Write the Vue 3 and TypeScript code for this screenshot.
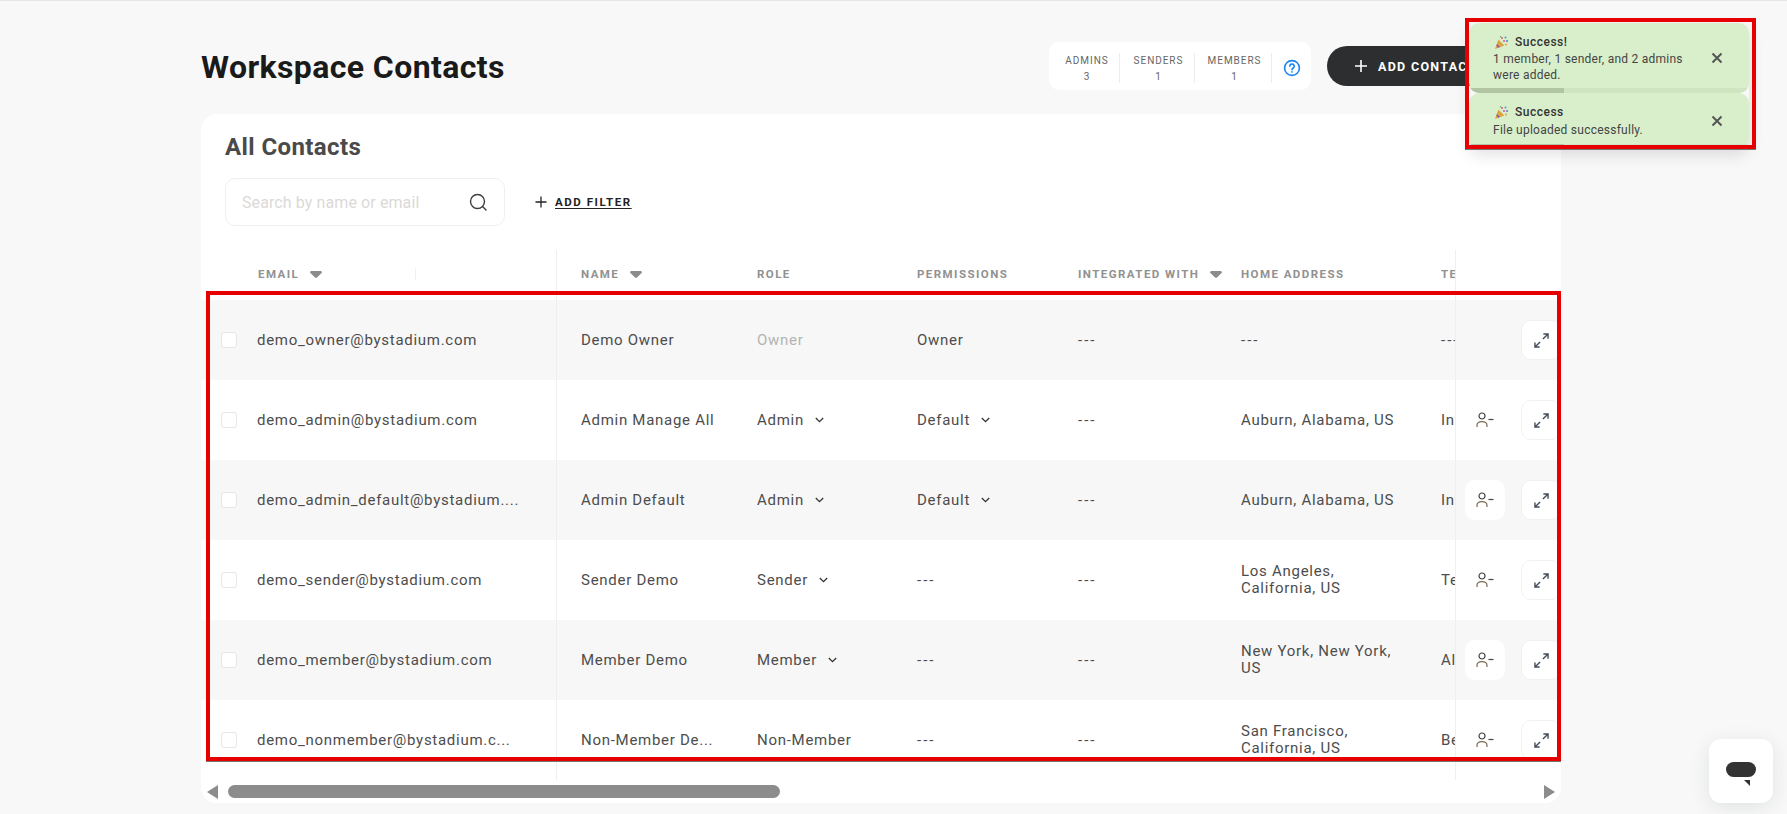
<template>
  <div class="page">
    <header class="head">
      <h1 class="title">Workspace Contacts</h1>
      <div class="head-right">
        <div class="stats">
          <div v-for="s in stats" :key="s.label" class="stat" :style="{ width: s.width + 'px' }">
            <span class="stat-label">{{ s.label }}</span>
            <span class="stat-value">{{ s.value }}</span>
          </div>
          <div class="stat-help">
            <svg width="18" height="18" viewBox="0 0 18 18" fill="none" stroke="#1a84f0" stroke-width="1.6">
              <circle cx="9" cy="9" r="7.4" />
              <path d="M6.8 7.2a2.2 2.2 0 1 1 3.4 1.8c-.8.5-1.2.9-1.2 1.7" stroke-linecap="round" />
              <circle cx="9" cy="12.9" r=".5" fill="#1a84f0" stroke-width=".8" />
            </svg>
          </div>
        </div>
        <button class="add-btn">
          <svg width="14" height="14" viewBox="0 0 14 14" stroke="#fff" stroke-width="1.6"><path d="M7 1v12M1 7h12" /></svg>
          ADD CONTACT
        </button>
      </div>
    </header>

    <section class="card">
      <div class="card-top">
        <h2 class="card-title">All Contacts</h2>
        <div class="filters">
          <div class="search">
            <span class="search-ph">Search by name or email</span>
            <svg width="20" height="20" viewBox="0 0 20 20" fill="none" stroke="#3d3d3d" stroke-width="1.4">
              <circle cx="9.5" cy="9.5" r="7" />
              <path d="M14.6 14.6l3.4 3.4" stroke-linecap="round" />
            </svg>
          </div>
          <a class="add-filter">
            <svg width="12" height="12" viewBox="0 0 12 12" stroke="#222" stroke-width="1.3"><path d="M6 .5v11M.5 6h11" /></svg>
            <span>ADD FILTER</span>
          </a>
        </div>
      </div>

      <div class="table">
        <div class="row row-head">
          <div class="cell first">
            <span class="th th-email">EMAIL<svg class="caret" width="12" height="7" viewBox="0 0 12 7"><path d="M1.6 0h8.8c1.2 0 1.9 1.2 1.2 2.1L7 6.4c-.5.6-1.5.6-2 0L.4 2.1C-.3 1.2.4 0 1.6 0z" /></svg></span>
            <span class="th-tick" />
          </div>
          <div class="cell"><span class="th">NAME<svg class="caret" width="12" height="7" viewBox="0 0 12 7"><path d="M1.6 0h8.8c1.2 0 1.9 1.2 1.2 2.1L7 6.4c-.5.6-1.5.6-2 0L.4 2.1C-.3 1.2.4 0 1.6 0z" /></svg></span></div>
          <div class="cell"><span class="th">ROLE</span></div>
          <div class="cell"><span class="th">PERMISSIONS</span></div>
          <div class="cell"><span class="th">INTEGRATED WITH<svg class="caret" width="12" height="7" viewBox="0 0 12 7"><path d="M1.6 0h8.8c1.2 0 1.9 1.2 1.2 2.1L7 6.4c-.5.6-1.5.6-2 0L.4 2.1C-.3 1.2.4 0 1.6 0z" /></svg></span></div>
          <div class="cell"><span class="th">HOME ADDRESS</span></div>
          <div class="cell"><span class="th">TEAM</span></div>
          <div class="actions" />
        </div>

        <div v-for="(r, i) in rows" :key="r.email" class="row" :class="{ odd: i % 2 === 0 }">
          <div class="cell first">
            <span class="check" />
            <span class="nowrap">{{ r.email }}</span>
          </div>
          <div class="cell"><span class="nowrap">{{ r.name }}</span></div>
          <div class="cell">
            <span :class="{ muted: r.role === 'Owner' }">{{ r.role }}</span>
            <svg v-if="r.roleMenu" class="chev" width="9" height="6" viewBox="0 0 9 6" fill="none" stroke="#333" stroke-width="1.3"><path d="M.8 1l3.7 3.7L8.2 1" /></svg>
          </div>
          <div class="cell">
            <span :class="dash(r.perm)">{{ r.perm }}</span>
            <svg v-if="r.permMenu" class="chev" width="9" height="6" viewBox="0 0 9 6" fill="none" stroke="#333" stroke-width="1.3"><path d="M.8 1l3.7 3.7L8.2 1" /></svg>
          </div>
          <div class="cell"><span class="dash">---</span></div>
          <div class="cell"><span class="addr" :class="dash(r.address)">{{ r.address }}</span></div>
          <div class="cell nowrap"><span :class="dash(r.team)">{{ r.team }}</span></div>
          <div class="actions">
            <button v-if="r.removable" class="icon-btn remove">
              <svg width="18" height="16" viewBox="0 0 18 16" fill="none" stroke="#454545" stroke-width="1.2">
                <circle cx="6" cy="4" r="3" />
                <path d="M1 15v-1.5C1 11 3 9.6 6 9.6s5 1.4 5 3.9V15" stroke="#7a6a55" />
                <path d="M12.5 7.5h5" />
              </svg>
            </button>
            <button class="icon-btn expand">
              <svg width="15" height="15" viewBox="0 0 16 16" fill="none" stroke="#454e5c" stroke-width="1.5">
                <path d="M9.5 6.5L15 1M10 1h5v5M6.5 9.5L1 15M1 10v5h5" />
              </svg>
            </button>
          </div>
        </div>
      </div>

      <div class="scroll">
        <span class="arrow left" />
        <div class="scroll-track"><span class="thumb" /></div>
        <span class="arrow right" />
      </div>
    </section>

    <!-- toasts -->
    <div class="toasts">
      <div v-for="t in toasts" :key="t.title" class="toast">
        <div class="toast-body">
          <div class="toast-title">
            <svg width="13" height="13" viewBox="0 0 13 13">
              <path d="M0 13L3.4 3.6l6 6z" fill="#d9a441" />
              <path d="M2 8l3 3-1.6.7-2-2z" fill="#8a5bb5" />
              <circle cx="7" cy="2" r="1" fill="#e2508d" />
              <circle cx="10.5" cy="1.6" r="1" fill="#3f9be0" />
              <circle cx="9" cy="5" r="1" fill="#e2508d" />
              <circle cx="12" cy="5" r="1" fill="#4b7fd6" />
              <circle cx="11" cy="8.5" r="1" fill="#e2a03c" />
              <circle cx="5.5" cy=".8" r=".7" fill="#5aa84f" />
            </svg>
            <span>{{ t.title }}</span>
          </div>
          <p class="toast-msg">{{ t.message }}</p>
        </div>
        <svg class="toast-x" width="12" height="12" viewBox="0 0 12 12" stroke="#555" stroke-width="2"><path d="M1.5 1.5l9 9M10.5 1.5l-9 9" /></svg>
        <div class="progress"><span /></div>
      </div>
    </div>

    <!-- annotation frames from the reference -->
    <div class="frame frame-rows" />
    <div class="frame frame-toasts" />

    <div class="chat">
      <span class="chat-bubble" />
      <span class="chat-tail" />
    </div>
  </div>
</template>

<script setup lang="ts">
interface Row {
  email: string
  name: string
  role: string
  roleMenu: boolean
  perm: string
  permMenu: boolean
  address: string
  team: string
  removable: boolean
}

const stats = [
  { label: 'ADMINS', value: 3, width: 71 },
  { label: 'SENDERS', value: 1, width: 75 },
  { label: 'MEMBERS', value: 1, width: 77 },
]

const rows: Row[] = [
  { email: 'demo_owner@bystadium.com', name: 'Demo Owner', role: 'Owner', roleMenu: false, perm: 'Owner', permMenu: false, address: '---', team: '---', removable: false },
  { email: 'demo_admin@bystadium.com', name: 'Admin Manage All', role: 'Admin', roleMenu: true, perm: 'Default', permMenu: true, address: 'Auburn, Alabama, US', team: 'Information', removable: true },
  { email: 'demo_admin_default@bystadium....', name: 'Admin Default', role: 'Admin', roleMenu: true, perm: 'Default', permMenu: true, address: 'Auburn, Alabama, US', team: 'Information', removable: true },
  { email: 'demo_sender@bystadium.com', name: 'Sender Demo', role: 'Sender', roleMenu: true, perm: '---', permMenu: false, address: 'Los Angeles, California, US', team: 'Technology', removable: true },
  { email: 'demo_member@bystadium.com', name: 'Member Demo', role: 'Member', roleMenu: true, perm: '---', permMenu: false, address: 'New York, New York, US', team: 'Alpha', removable: true },
  { email: 'demo_nonmember@bystadium.c...', name: 'Non-Member De...', role: 'Non-Member', roleMenu: false, perm: '---', permMenu: false, address: 'San Francisco, California, US', team: 'Beta', removable: true },
]

const toasts = [
  { title: 'Success!', message: '1 member, 1 sender, and 2 admins were added.' },
  { title: 'Success', message: 'File uploaded successfully.' },
]

const dash = (v: string) => (v === '---' ? 'dash' : '')
</script>

<style>
html,
body {
  margin: 0;
  background: #f8f8f8;
  overflow: hidden;
}
</style>

<style scoped>
.page {
  position: relative;
  box-sizing: border-box;
  height: 814px;
  padding: 42px 226px 0 201px;
  border-top: 1px solid #e6e6ea;
  font-family: Roboto, 'Open Sans', sans-serif;
  color: #4d4d4d;
  overflow: hidden;
}

.head {
  display: flex;
  align-items: center;
  justify-content: space-between;
  height: 48px;
  margin-top: -1px;
  margin-bottom: 24px;
}
.title {
  margin: 0;
  padding-top: 2px;
  font-size: 32px;
  font-weight: 700;
  letter-spacing: 0.4px;
  color: #1a1a1a;
}
.head-right {
  display: flex;
  align-items: center;
  gap: 16px;
}
.stats {
  box-sizing: border-box;
  display: flex;
  align-items: flex-start;
  height: 48px;
  padding-top: 11px;
  background: #fff;
  border-radius: 10px;
}
.stat {
  box-sizing: border-box;
  height: 30px;
  padding: 2px 0 0 3px;
  display: flex;
  flex-direction: column;
  align-items: center;
  justify-content: space-between;
  border-right: 1px solid #ededed;
  font-size: 10px;
  line-height: 12px;
  letter-spacing: 0.95px;
  color: #666;
}
.stat:first-child {
  padding-left: 6px;
}
.stat-help {
  width: 39px;
  height: 30px;
  display: flex;
  align-items: center;
  justify-content: center;
}
.add-btn {
  width: 234px;
  height: 40px;
  display: flex;
  align-items: center;
  gap: 10px;
  padding: 0 0 0 27px;
  border: 0;
  border-radius: 20px;
  background: #2d2e30;
  color: #fff;
  font: 700 12.5px Roboto, sans-serif;
  letter-spacing: 1.3px;
}

.card {
  background: #fff;
  border-radius: 16px;
  overflow: hidden;
}
.card-top {
  padding: 19px 24px 24px;
}
.card-title {
  margin: 0 0 17px;
  font-size: 24px;
  line-height: 28px;
  font-weight: 700;
  letter-spacing: 0.4px;
  color: #4a4a4a;
}
.filters {
  display: flex;
  align-items: center;
  gap: 30px;
}
.search {
  box-sizing: border-box;
  width: 280px;
  height: 48px;
  display: flex;
  align-items: center;
  justify-content: space-between;
  padding: 0 16px;
  border: 1px solid #efefef;
  border-radius: 10px;
}
.search-ph {
  font-size: 16px;
  letter-spacing: 0.1px;
  color: #dcd9d7;
}
.add-filter {
  display: flex;
  align-items: center;
  gap: 8px;
  font-size: 11.5px;
  font-weight: 700;
  letter-spacing: 1.55px;
  color: #222;
}
.add-filter span {
  text-decoration: underline;
  text-underline-offset: 2px;
}

.table {
  height: 530px;
  overflow: hidden;
}
.row {
  position: relative;
  display: grid;
  grid-template-columns: 356px 176px 160px 161px 163px 200px 200px;
  height: 80px;
  background: #fff;
  font-size: 15px;
  letter-spacing: 0.72px;
  line-height: 17px;
}
.row.odd {
  background: #f7f7f7;
}
.row-head {
  height: 50px;
}
.row-head .cell {
  padding-bottom: 2px;
}
.cell {
  box-sizing: border-box;
  min-width: 0;
  display: flex;
  align-items: center;
  padding-left: 24px;
  color: #4d4d4d;
}
.nowrap {
  white-space: nowrap;
}
.dash {
  letter-spacing: 2px;
}
.cell.first {
  position: relative;
  padding-left: 20px;
  gap: 20px;
  border-right: 1px solid #efefef;
}
.row-head .cell.first {
  padding-left: 57px;
  gap: 0;
}
.th {
  display: inline-flex;
  align-items: center;
  gap: 11px;
  font-size: 11.5px;
  font-weight: 700;
  letter-spacing: 1.45px;
  color: #919191;
  white-space: nowrap;
}
.caret {
  display: block;
  fill: #8c8c8c;
}
.th-tick {
  position: absolute;
  left: 214px;
  top: 18px;
  width: 1px;
  height: 12px;
  background: #f0f0f0;
}
.check {
  flex: none;
  box-sizing: border-box;
  width: 16px;
  height: 16px;
  border: 1px solid #e6e6e6;
  border-radius: 3px;
  background: #fff;
}
.muted {
  color: #b3b3b3;
}
.chev {
  margin-left: 11px;
}
.addr {
  max-width: 168px;
}
.actions {
  box-sizing: border-box;
  position: absolute;
  top: 0;
  right: 0;
  bottom: 0;
  width: 106px;
  display: flex;
  align-items: center;
  justify-content: flex-end;
  gap: 16px;
  border-left: 1px solid #efefef;
  background: inherit;
}
.icon-btn {
  display: flex;
  align-items: center;
  justify-content: center;
  padding: 0;
  background: #fff;
  border-radius: 10px;
}
.remove {
  width: 40px;
  height: 40px;
  border: 0;
}
.expand {
  box-sizing: border-box;
  width: 40px;
  height: 40px;
  border: 1px solid #f1f1f1;
}

.scroll {
  height: 23px;
  display: flex;
  align-items: center;
  padding: 0 6px;
  background: #fff;
}
.scroll-track {
  flex: 1;
  margin: 0 10px;
}
.thumb {
  display: block;
  width: 552px;
  height: 13px;
  border-radius: 7px;
  background: #8c8c8c;
}
.arrow {
  width: 0;
  height: 0;
  border-top: 7px solid transparent;
  border-bottom: 7px solid transparent;
}
.arrow.left {
  border-right: 11px solid #8c8c8c;
}
.arrow.right {
  border-left: 11px solid #8c8c8c;
}

.toasts {
  position: absolute;
  top: 22px;
  left: 1469px;
  width: 280px;
  box-shadow: 0 6px 16px rgba(0, 0, 0, 0.12);
  border-radius: 10px;
}
.toast {
  position: relative;
  box-sizing: border-box;
  display: flex;
  align-items: center;
  background: #d9efcb;
  border-radius: 10px;
  overflow: hidden;
  color: #333;
}
.toast:first-child {
  height: 70px;
}
.toast:last-child {
  height: 56px;
}
.toast-body {
  box-sizing: border-box;
  align-self: flex-start;
  width: 216px;
  margin-left: 24px;
  padding-top: 10px;
}
.toast-title {
  display: flex;
  align-items: center;
  gap: 7px;
  margin-left: 2px;
  font-size: 12px;
  line-height: 18px;
  font-weight: 500;
  letter-spacing: 0.5px;
}
.toast-msg {
  margin: 0;
  font-size: 12px;
  line-height: 16px;
  letter-spacing: 0.25px;
  color: #444;
}
.toast:last-child .toast-msg {
  margin-top: 1px;
}
.toast-x {
  margin-left: 2px;
}
.progress {
  position: absolute;
  left: 0;
  right: 0;
  bottom: 0;
  height: 5px;
  background: #cfe4c0;
}
.progress span {
  display: block;
  width: 95px;
  height: 100%;
  background: #b2c5a3;
}

.frame {
  position: absolute;
  box-sizing: border-box;
  border: 4px solid #e60000;
  box-shadow: 0 1px 0 #777;
  pointer-events: none;
}
.frame-rows {
  left: 206px;
  top: 290px;
  width: 1355px;
  height: 470px;
}
.frame-toasts {
  left: 1465px;
  top: 17px;
  width: 291px;
  height: 131px;
}

.chat {
  position: absolute;
  left: 1709px;
  top: 738px;
  width: 64px;
  height: 64px;
  background: #fff;
  border-radius: 12px;
  box-shadow: 0 4px 20px rgba(0, 40, 40, 0.1);
}
.chat-bubble {
  position: absolute;
  left: 17px;
  top: 23px;
  width: 30px;
  height: 15px;
  border-radius: 8px;
  background: #333;
}
.chat-tail {
  position: absolute;
  left: 35px;
  top: 41px;
  width: 0;
  height: 0;
  border-top: 6px solid #333;
  border-left: 6px solid transparent;
}
</style>
